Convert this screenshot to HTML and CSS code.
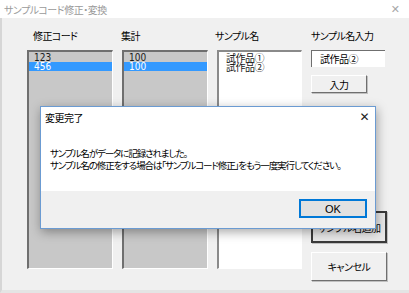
FILE: index.html
```html
<!DOCTYPE html>
<html lang="ja">
<head>
<meta charset="utf-8">
<link rel="stylesheet" href="styles.css">
</head>
<body>
<div class="window">
  <div class="titlebar">
    <span class="title">サンプルコード修正・変換</span>
    <span class="close">✕</span>
  </div>
  <div class="client">
    <div class="col">
      <div class="label l-code">修正コード</div>
      <div class="list gray">
        <div class="item">123</div>
        <div class="item sel">456</div>
      </div>
    </div>
    <div class="col">
      <div class="label l-sum">集計</div>
      <div class="list gray">
        <div class="item">100</div>
        <div class="item sel">100</div>
      </div>
    </div>
    <div class="col">
      <div class="label l-name">サンプル名</div>
      <div class="list white">
        <div class="item jp">試作品①</div>
        <div class="item jp">試作品②</div>
      </div>
    </div>
    <div class="col right">
      <div class="label">サンプル名入力</div>
      <div class="textbox">試作品②</div>
      <div class="btn small">入力</div>
      <div class="spacer"></div>
      <div class="btn big default">サンプル名追加</div>
      <div class="btn big cancel">キャンセル</div>
    </div>
  </div>
  <div class="dialog">
    <div class="dlg-title">
      <span>変更完了</span>
      <span class="dlg-close">✕</span>
    </div>
    <div class="dlg-body">
      <p class="line1">サンプル名がデータに記録されました。</p>
      <p>サンプル名の修正をする場合は「サンプルコード修正」をもう一度実行してください。</p>
    </div>
    <div class="dlg-foot">
      <div class="ok">OK</div>
    </div>
  </div>
</div>
</body>
</html>
```

FILE: styles.css
```css
* { box-sizing: border-box; }
html, body { margin: 0; padding: 0; }
body {
  width: 409px;
  height: 293px;
  overflow: hidden;
  background: #f0f0f0;
  font-family: "Noto Sans CJK JP", sans-serif;
  font-size: 10px;
  color: #000;
  font-feature-settings: "palt";
}
.window {
  position: relative;
  width: 409px;
  height: 293px;
  display: flex;
  flex-direction: column;
}
.titlebar {
  height: 18px;
  background: #fff;
  display: flex;
  align-items: center;
  justify-content: space-between;
  padding: 0 9px 0 4px;
}
.title { color: #9a9a9a; font-size: 10px; letter-spacing: -0.5px; }
.close { color: #a8a8a8; font-size: 11px; font-family: "DejaVu Sans", sans-serif; }
.client {
  flex: 1;
  display: grid;
  grid-template-columns: 86px 86px 85px 75px;
  column-gap: 9px;
  padding: 11px 0 0 25px;
  border-left: 2px solid #d6d6d6;
  border-bottom: 3px solid #e4e4e4;
}
.col { display: flex; flex-direction: column; }
.label {
  height: 14px;
  line-height: 14px;
  margin: 0 0 7px 0;
  font-size: 10px;
  letter-spacing: -0.6px;
  white-space: nowrap;
}
.l-code { margin-left: 6px; }
.l-sum { margin-left: -1px; }
.l-name { margin-left: -2px; }
.list {
  height: 219px;
  border-top: 2px solid #6f6f6f;
  border-left: 2px solid #6f6f6f;
  border-right: 1px solid #fff;
  border-bottom: 1px solid #fff;
  padding-top: 1px;
}
.list.gray { background: #c8c8c8; }
.list.white { background: #fff; border-color: #8a8a8a #fff #fff #8a8a8a; }
.item {
  height: 9px;
  line-height: 9px;
  padding-left: 5px;
  font-family: "DejaVu Sans Condensed", "Liberation Sans", sans-serif;
  font-size: 10px;
  color: #1a1a1a;
}
.item.sel { background: #3399ff; color: #fff; }
.item.jp { font-family: "Noto Sans CJK JP", sans-serif; padding-left: 7px; letter-spacing: -0.5px; }
.textbox {
  height: 17px;
  width: 74px;
  background: #fff;
  border-top: 1px solid #6f6f6f;
  border-left: 1px solid #6f6f6f;
  padding-left: 8px;
  line-height: 16px;
  letter-spacing: -0.5px;
}
.btn {
  background: #f0f0f0;
  border-top: 1px solid #fff;
  border-left: 1px solid #fff;
  border-right: 1px solid #6f6f6f;
  border-bottom: 1px solid #6f6f6f;
  box-shadow: 1px 1px 0 #c0c0c0;
  display: flex;
  align-items: center;
  justify-content: center;
  white-space: nowrap;
  letter-spacing: -0.5px;
}
.btn.small { width: 56px; height: 18px; margin-top: 8px; }
.spacer { flex: 1; }
.btn.big { width: 76px; }
.btn.default { height: 32px; border: 2px solid #3a3a3a; margin-bottom: 9px; background: #e8e8e8; }
.btn.cancel { height: 29px; margin-bottom: 9px; }

.dialog {
  position: absolute;
  left: 40px;
  top: 106px;
  width: 336px;
  height: 123px;
  background: #fff;
  border: 1px solid #6b9bd2;
  box-shadow: 1px 3px 10px rgba(0,0,0,0.35);
  display: flex;
  flex-direction: column;
}
.dlg-title {
  height: 20px;
  display: flex;
  align-items: center;
  justify-content: space-between;
  padding: 0 6px 0 4px;
  letter-spacing: -0.5px;
}
.dlg-close { font-family: "DejaVu Sans", sans-serif; font-size: 12px; color: #222; }
.dlg-body { flex: 1; padding: 20px 0 0 9px; }
.dlg-body p { margin: 0; line-height: 12px; font-size: 9.5px; letter-spacing: -1.1px; white-space: nowrap; }
.dlg-body p.line1 { letter-spacing: -1.1px; }
.dlg-foot {
  height: 37px;
  background: #f0f0f0;
  display: flex;
  justify-content: flex-end;
  padding: 8px 8px 0 0;
}
.ok {
  width: 68px;
  height: 19px;
  border: 2px solid #0078d7;
  background: #e1e1e1;
  display: flex;
  align-items: center;
  justify-content: center;
  font-family: "Liberation Sans", sans-serif;
  font-size: 11px;
}
```
